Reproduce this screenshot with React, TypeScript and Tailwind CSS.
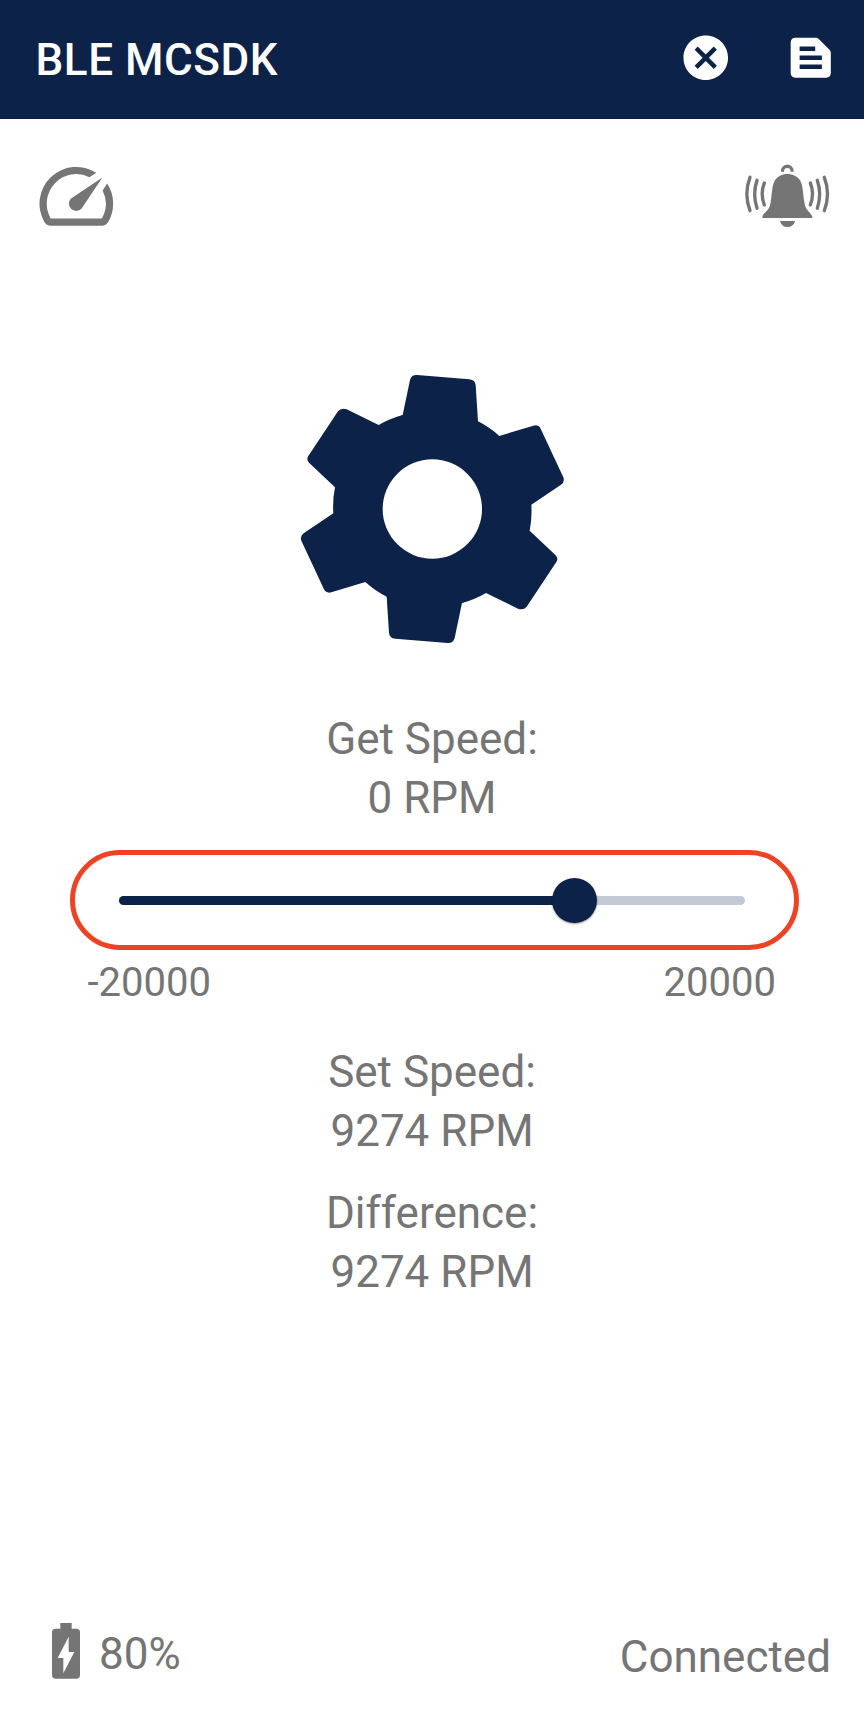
import React from "react";

const NAVY = "#0d2248";
const GREY = "#757575";

function CancelIcon() {
  return (
    <svg viewBox="0 0 24 24" className="size-[53.5px]" fill="#fff">
      <path d="M12 2C6.47 2 2 6.47 2 12s4.47 10 10 10 10-4.47 10-10S17.53 2 12 2zm5 13.59L15.59 17 12 13.41 8.41 17 7 15.59 10.59 12 7 8.41 8.41 7 12 10.59 15.59 7 17 8.41 13.41 12 17 15.59z" />
    </svg>
  );
}

function LogIcon() {
  return (
    <svg viewBox="0 0 24 24" className="size-[53.5px]" fill="#fff">
      <path d="M20.41 8.41l-4.83-4.83C15.21 3.21 14.7 3 14.17 3H5c-1.1 0-2 .9-2 2v14c0 1.1.9 2 2 2h14c1.1 0 2-.9 2-2V9.83c0-.53-.21-1.04-.59-1.42zM7 7h7v2H7V7zm10 10H7v-2h10v2zm0-4H7v-2h10v2z" />
    </svg>
  );
}

function GaugeIcon() {
  return (
    <svg viewBox="0 0 24 24" className="size-[88.5px]" fill={GREY}>
      <path d="M20.38 8.57l-1.23 1.85a8 8 0 0 1-.22 7.58H5.07A8 8 0 0 1 15.58 6.85l1.85-1.23A10 10 0 0 0 3.35 19a2 2 0 0 0 1.72 1h13.85a2 2 0 0 0 1.74-1 10 10 0 0 0-.27-10.44z" />
      <path d="M10.59 15.41a2 2 0 0 0 2.83 0l5.66-8.49-8.49 5.66a2 2 0 0 0 0 2.83z" />
    </svg>
  );
}

function BellIcon() {
  return (
    <svg viewBox="240 480 285 216" className="h-[72px] w-[95px]" fill={GREY}>
      <path d="M307 654V650C310 637 327 634 331 612C337 580 335 559 344 542C352 529 366 522 382 522C398 522 413 529 421 542C430 559 428 580 434 612C438 634 454 637 457 650V654Z" />
      <path d="M360 663H405C402 675 393 681 382 681C371 681 363 675 360 663Z" />
      <path d="M363 515C362 502 371 494 382 494C393 494 402 502 401 515H392C392 507 388 504 382 504C376 504 372 507 372 515Z" />
      <g fill="none" stroke={GREY} strokeWidth="10" strokeLinecap="round">
        <path d="M313 549Q300 581 313 615" />
        <path d="M291 541Q277 581 291 625" />
        <path d="M270 532Q251 581 270 632" />
        <path d="M451 549Q464 581 451 615" />
        <path d="M472 541Q486 581 472 625" />
        <path d="M493 532Q512 581 493 632" />
      </g>
    </svg>
  );
}

const HALF_GEAR =
  "M368 165L390 60Q394 44 411 45L568 58Q586 60 587 76L594 184A296 296 0 0 1 658 228L760 197Q775 193 782 206L850 352Q855 366 843 374L754 434A296 296 0 0 1 749 512L827 586Q836 596 829 606L740 740Q731 751 714 746L618 699A296 296 0 0 1 546 729L457 447Z";

function GearIcon() {
  return (
    <svg viewBox="0 0 900 900" className="size-[300px]" fill={NAVY}>
      <path d={HALF_GEAR} />
      <path d={HALF_GEAR} transform="rotate(180 457 447)" />
      <circle cx="457" cy="447" r="222" fill="none" stroke={NAVY} strokeWidth="146" />
      <circle cx="457" cy="447" r="149" fill="#fff" />
    </svg>
  );
}

function BatteryIcon() {
  return (
    <svg viewBox="66 69 84 168" className="h-14 w-7" fill={GREY}>
      <path
        fillRule="evenodd"
        d="M91 69H125V86H139Q150 86 150 97V225Q150 236 139 236H77Q66 236 66 225V97Q66 86 77 86H91ZM116 110L83 174H100V220L133 156H116Z"
      />
    </svg>
  );
}

function Reading({ label, value }: { label: string; value: number }) {
  return (
    <div className="text-center text-[44px] leading-[59px]">
      <div>{label}:</div>
      <div>{value} RPM</div>
    </div>
  );
}

function SpeedSlider({ min, max, value }: { min: number; max: number; value: number }) {
  const percent = ((value - min) / (max - min)) * 100;
  return (
    <div className="ml-[70px] flex h-[100px] w-[729px] items-center rounded-full border-[5px] border-[#ed4224] pr-[49px] pl-11">
      <div className="relative h-[9px] w-full rounded-full bg-[#c4c9d6]">
        <div className="h-full rounded-full bg-[#0d2248]" style={{ width: `${percent}%` }} />
        <div
          className="absolute -top-[18px] -ml-[22.5px] size-[45px] rounded-full bg-[#0d2248] shadow-[0_1px_2px_rgba(0,0,0,0.4)]"
          style={{ left: `${percent - 0.5}%` }}
        />
      </div>
    </div>
  );
}

export default function App() {
  return (
    <div className="flex h-[1716px] w-[864px] flex-col bg-white font-['Roboto',sans-serif] text-[#757575]">
      <header className="flex h-[119px] shrink-0 items-center bg-[#0d2248] pr-[26.5px] pb-1 pl-[35.5px] text-white">
        <h1 className="flex-1 pt-1 text-[44px] leading-[52px] font-medium tracking-[0.55px]">BLE MCSDK</h1>
        <div className="flex gap-[52px]">
          <CancelIcon />
          <LogIcon />
        </div>
      </header>

      <div className="flex h-[121px] justify-between pt-[32.5px] pr-[29px] pl-8">
        <GaugeIcon />
        <div className="pt-[8.5px]">
          <BellIcon />
        </div>
      </div>

      <div className="mt-[120px] ml-[280px]">
        <GearIcon />
      </div>

      <main className="mt-[50px]">
        <Reading label="Get Speed" value={0} />
        <div className="mt-[22px]">
          <SpeedSlider min={-20000} max={20000} value={9274} />
        </div>
        <div className="mt-2 flex justify-between pr-[88px] pl-[87.5px] text-[40px] leading-[50px]">
          <span>-20000</span>
          <span>20000</span>
        </div>
        <div className="mt-[35px] flex flex-col gap-[23px]">
          <Reading label="Set Speed" value={9274} />
          <Reading label="Difference" value={9274} />
        </div>
      </main>

      <footer className="mt-auto flex items-start justify-between pr-[33px] pb-[29px] pl-[52px] text-[44px] leading-[60px]">
        <div className="flex items-start">
          <BatteryIcon />
          <span className="ml-[19px] pt-px">80%</span>
        </div>
        <span className="pt-1">Connected</span>
      </footer>
    </div>
  );
}
